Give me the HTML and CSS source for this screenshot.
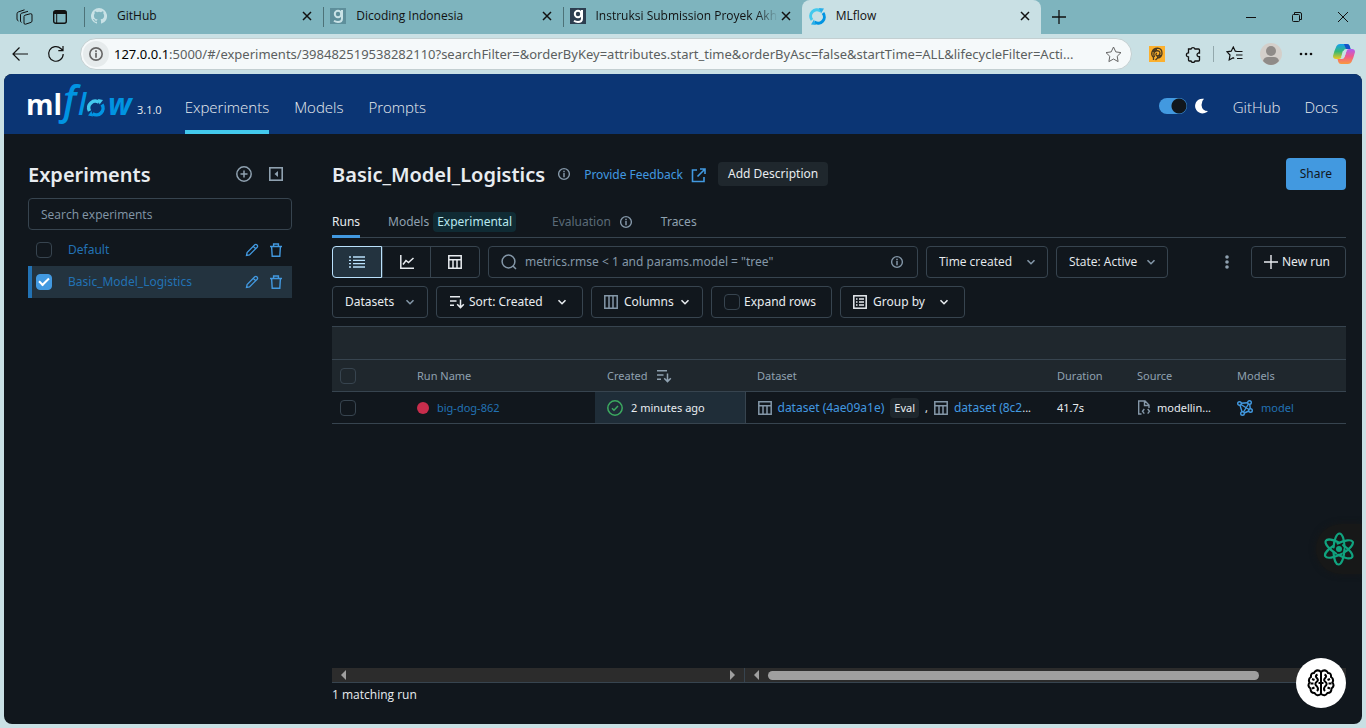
FILE: index.html
```html
<!DOCTYPE html>
<html lang="en">
<head>
<meta charset="utf-8">
<meta name="viewport" content="width=device-width, initial-scale=1">
<title>MLflow</title>
<link rel="stylesheet" href="styles.css">
</head>
<body>
<svg class="defs" aria-hidden="true">
  <symbol id="i-x" viewBox="0 0 10 10"><path d="M1 1l8 8M9 1L1 9" fill="none" stroke="currentColor" stroke-width="1.5"/></symbol>
  <symbol id="i-chev" viewBox="0 0 10 10"><path d="M1.5 3.2L5 6.7l3.500-3.500" fill="none" stroke="currentColor" stroke-width="1.6"/></symbol>
  <symbol id="i-info" viewBox="0 0 14 14"><circle cx="7" cy="7" r="5.400" fill="none" stroke="currentColor" stroke-width="1.400"/><path d="M7 6v4.200M7 3.800v1.400" stroke="currentColor" stroke-width="1.500"/></symbol>
  <symbol id="i-pencil" viewBox="0 0 14 14"><path d="M1.500 12.500l.6-3L9.800 1.800a1.400 1.400 0 0 1 2 0l.4.4a1.400 1.400 0 0 1 0 2L4.500 11.900zM8.300 3.300l2.400 2.400" fill="none" stroke="currentColor" stroke-width="1.300"/></symbol>
  <symbol id="i-trash" viewBox="0 0 14 14"><path d="M1 3.500h12M4.600 3.500V1h4.800v2.500M2.600 3.500l.6 9.700h7.600l.6-9.700" fill="none" stroke="currentColor" stroke-width="1.400"/></symbol>
  <symbol id="i-table" viewBox="0 0 14 14"><path d="M.8.8h12.400v12.400H.8zM.8 4.800h12.400M5 4.800v8.400M9 4.800v8.400" fill="none" stroke="currentColor" stroke-width="1.500"/></symbol>
  <symbol id="i-sort" viewBox="0 0 16 14"><path d="M1 1.800h10M1 6h6.500M1 10.200h4M11.500 4.500v8M8.200 9.300l3.300 3.300 3.300-3.300" fill="none" stroke="currentColor" stroke-width="1.500"/></symbol>
  <symbol id="i-g" viewBox="0 0 16 16"><rect width="16" height="16" fill="var(--tile)"/><circle cx="8" cy="6" r="3.200" fill="none" stroke="var(--ink)" stroke-width="2"/><path d="M12 2v8.500q0 3.500-4 3.500-2.400 0-4-1.200" fill="none" stroke="var(--ink)" stroke-width="2"/></symbol>
</svg>

<header class="browser">
  <div class="tabstrip">
    <button class="chrome-btn" aria-label="Workspaces"><svg width="17" height="17" viewBox="0 0 17 17" fill="none" stroke="currentColor" stroke-linejoin="round"><path d="M8 7.500q0-1 1-1.300l5.500-1.500q1.500-.2 1.500 1.300v6q0 1-1 1.400l-5.500 1.800q-1.500.3-1.500-1.200z"/><path d="M5.500 13.500Q4.500 13 4.500 12V5.800q0-1.200 1.200-1.600L12 2.300M2.500 12Q1 11.500 1 10V4.800Q1 3.500 2.200 3L8.500.8"/></svg></button>
    <button class="chrome-btn" aria-label="Tab actions"><svg width="14" height="14" viewBox="0 0 14 14"><rect x=".7" y=".7" width="12.600" height="12.600" rx="2" fill="none" stroke="currentColor" stroke-width="1.400"/><path d="M1 1h12v3H1z" fill="currentColor"/><path d="M3.700 4v9" stroke="currentColor"/></svg></button>
    <div class="tabs">
      <div class="tab"><svg class="fav" width="16" height="16" viewBox="0 0 16 16"><path fill="#c9e2e6" d="M8 0a8 8 0 0 0-2.530 15.590c.4.070.55-.17.550-.38v-1.490c-2.010.37-2.530-.490-2.690-.940-.09-.230-.480-.940-.820-1.130-.280-.150-.680-.520-.010-.530.630-.010 1.080.580 1.230.820.720 1.210 1.870.870 2.330.660.070-.520.280-.870.510-1.070-1.780-.2-3.640-.890-3.640-3.950 0-.870.310-1.590.820-2.150-.080-.2-.360-1.020.080-2.120 0 0 .670-.210 2.200.820a7.400 7.400 0 0 1 4 0c1.530-1.040 2.200-.820 2.200-.820.440 1.100.160 1.920.080 2.120.510.560.820 1.270.820 2.150 0 3.070-1.870 3.750-3.650 3.950.290.250.540.730.540 1.480v2.200c0 .21.150.46.550.38A8 8 0 0 0 8 0"/></svg><span class="tab-title">GitHub</span><button class="close" aria-label="Close GitHub"><svg width="10" height="10"><use href="#i-x"/></svg></button></div>
      <div class="tab"><svg class="fav fav-dim" width="16" height="16"><use href="#i-g"/></svg><span class="tab-title">Dicoding Indonesia</span><button class="close" aria-label="Close Dicoding Indonesia"><svg width="10" height="10"><use href="#i-x"/></svg></button></div>
      <div class="tab"><svg class="fav fav-dark" width="16" height="16"><use href="#i-g"/></svg><span class="tab-title tab-fade">Instruksi Submission Proyek Akhir</span><button class="close" aria-label="Close Instruksi Submission"><svg width="10" height="10"><use href="#i-x"/></svg></button></div>
      <div class="tab tab-active"><svg class="fav" width="17" height="17" viewBox="0 0 17 17" fill="none" stroke-width="3"><path d="M3 12A6.300 6.300 0 0 1 11.500 2.900" stroke="#43c9ed"/><path d="M14 5A6.300 6.300 0 0 1 5.500 14.100" stroke="#0194e2"/><path d="M10 0l5 .5-3 5zM7 17l-5-.5 3-5z" fill="#28aee8"/></svg><span class="tab-title">MLflow</span><button class="close" aria-label="Close MLflow"><svg width="10" height="10"><use href="#i-x"/></svg></button></div>
    </div>
    <button class="chrome-btn" aria-label="New tab"><svg width="14" height="14" viewBox="0 0 14 14"><path d="M7 0v14M0 7h14" stroke="currentColor" stroke-width="1.300"/></svg></button>
    <div class="window-controls">
      <button aria-label="Minimize"><svg width="10" height="10" viewBox="0 0 10 10"><path d="M0 5.500h10" stroke="currentColor"/></svg></button>
      <button aria-label="Restore"><svg width="10" height="10" viewBox="0 0 10 10" fill="none" stroke="currentColor"><rect x=".5" y="2.500" width="7" height="7" rx="1"/><path d="M2.500 2V.5H8Q9.500.5 9.500 2v5.500H8"/></svg></button>
      <button aria-label="Close window"><svg width="10" height="10" viewBox="0 0 10 10"><path d="M0 0l10 10M10 0L0 10" stroke="currentColor"/></svg></button>
    </div>
  </div>
  <div class="toolbar">
    <button class="chrome-btn nav-btn" aria-label="Back"><svg width="16" height="14" viewBox="0 0 16 14"><path d="M16 7H1M7.500.5L1 7l6.500 6.500" fill="none" stroke="currentColor" stroke-width="1.200"/></svg></button>
    <button class="chrome-btn nav-btn" aria-label="Reload"><svg width="18" height="18" viewBox="0 0 18 18"><path d="M16.200 9A7.300 7.300 0 1 1 14 3.700l1.700 1.600M16 1v4.700h-4.700" fill="none" stroke="currentColor" stroke-width="1.200"/></svg></button>
    <div class="address">
      <span class="site-info"><svg width="16" height="16"><use href="#i-info"/></svg></span>
      <span class="url"><b>127.0.0.1</b>:5000/#/experiments/398482519538282110?searchFilter=&amp;orderByKey=attributes.start_time&amp;orderByAsc=false&amp;startTime=ALL&amp;lifecycleFilter=Acti...</span>
      <button class="star" aria-label="Favorite"><svg width="17" height="17" viewBox="0 0 17 17"><path d="M8.500 1l2.300 4.900 5.200.7-3.800 3.700.9 5.300-4.600-2.600-4.600 2.600.9-5.300L1 6.600l5.200-.7z" fill="none" stroke="currentColor" stroke-linejoin="round"/></svg></button>
    </div>
    <div class="extensions">
      <button aria-label="Extension"><svg width="16" height="16" viewBox="0 0 16 16"><path d="M0 0h16v16H0z" fill="#fcb02d"/><path d="M4.500 14v-2.500Q2 9 3 6q1.500-3.800 5.500-3.800Q13 2.500 13 7.200q0 4.300-4.500 4.800L6.500 14M5.500 11Q3.500 6 7.500 4.800q3.500-.3 3.500 2.500-.3 2.700-3 2.700Q5.800 8.500 8 7M4 6q1.500-2.500 4-2.500M12 9q-1 2.500-4 2.500" fill="none" stroke="#4b3a1e" stroke-width="1.300"/></svg></button>
      <button aria-label="Extensions"><svg width="16" height="17" viewBox="0 0 16 17"><path d="M3.500 3H6a2.100 2.100 0 0 1 4 0h3.500q1 0 1 1v3h-1.200a1.900 1.900 0 0 0 0 3.600h1.200V14q0 1-1 1H10a2.100 2.100 0 0 1-4 0H4.500q-1 0-1-1v-3a2.100 2.100 0 0 1 0-4.200z" fill="none" stroke="currentColor" stroke-width="1.300"/></svg></button>
      <span class="divider"></span>
      <button aria-label="Favorites"><svg width="17" height="16" viewBox="0 0 17 16"><path d="M11 5.500L9.300 5.200 7.300 1 5.200 5.200 1 5.800l3 3.200-.8 5 4-2.200 1 .6M11 5.500h5.500M10 9h6.500M11 12.500h5.500" fill="none" stroke="currentColor" stroke-width="1.200"/></svg></button>
      <button aria-label="Profile"><svg width="22" height="22" viewBox="0 0 22 22"><circle cx="11" cy="11" r="11" fill="#d4cfca"/><circle cx="11" cy="8" r="5" fill="#8f8b88"/><path d="M3 18q1-4 5-4h6q4 0 5 4-3.500 4-8 4t-8-4" fill="#8f8b88"/></svg></button>
      <button aria-label="More"><svg width="14" height="4" viewBox="0 0 14 4" fill="currentColor"><circle cx="2" cy="2" r="1.300"/><circle cx="7" cy="2" r="1.300"/><circle cx="12" cy="2" r="1.300"/></svg></button>
      <button class="copilot" aria-label="Copilot"><svg width="22" height="22" viewBox="0 0 22 22"><defs><linearGradient id="cA" x2="0" y2="1"><stop stop-color="#149ff0"/><stop offset=".5" stop-color="#35b875"/><stop offset="1" stop-color="#f2c81e"/></linearGradient><linearGradient id="cB" x2="0" y2="1"><stop stop-color="#b05cf0"/><stop offset=".5" stop-color="#f05a8c"/><stop offset="1" stop-color="#f99a3c"/></linearGradient></defs><path d="M7 1h7q2 0 2.700 2l.8 3H13q-2 0-2.600 2L8.500 14q-.8 2-2.500 2H3q-3 0-3-3Q1.500 7 3.500 3 4.700 1 7 1z" fill="url(#cA)"/><path d="M15 21H8q-2 0-2.700-2l-.8-3H9q2 0 2.600-2L13.500 8q.8-2 2.500-2h3q3 0 3 3-1.500 6-3.500 10-1.200 2-3.500 2z" fill="url(#cB)"/><path d="M11 1h3q2 0 2.700 2l.8 3H13z" fill="#1652c8"/><path d="M9.800 8h3.700l-2 6H8.200z" fill="#c9e0e4"/></svg></button>
    </div>
  </div>
</header>

<div class="page">
  <header class="app-header">
    <a class="logo" href="#" aria-label="MLflow home"><svg width="105" height="60" viewBox="0 -9 105 60">
      <text class="logo-ml" x="-1" y="32">ml</text>
      <text class="logo-f" x="36" y="31">f</text><text class="logo-l" x="51" y="32">l</text>
      <text class="logo-w" x="81" y="32">w</text>
      <g fill="none" stroke-width="3.500"><path d="M62.500 28A6.700 6.700 0 0 1 72 19.200" stroke="#43c9ed"/><path d="M75 21.500A6.700 6.700 0 0 1 65.500 30.600" stroke="#0194e2"/></g><path d="M71 16l5 1-3.500 4.500z" fill="#43c9ed"/><path d="M66 33.500l-5-1 3.500-4.500z" fill="#0194e2"/>
    </svg></a>
    <span class="version">3.1.0</span>
    <nav class="main-nav">
      <a class="current" href="#">Experiments</a><a href="#">Models</a><a href="#">Prompts</a>
    </nav>
    <div class="header-right">
      <label class="theme"><input type="checkbox" role="switch" checked aria-label="Dark mode"><svg width="14" height="16" viewBox="0 0 14 16"><path d="M9 .8A7.400 7.400 0 1 0 13 13Q7 13 6.500 7 6.500 3 9 .8z" fill="#fff"/></svg></label>
      <a href="#">GitHub</a><a href="#">Docs</a>
    </div>
  </header>

  <div class="content">
    <aside class="sidebar">
      <div class="side-head">
        <h2>Experiments</h2>
        <button aria-label="Create experiment"><svg width="16" height="16" viewBox="0 0 16 16"><circle cx="8" cy="8" r="7.200" fill="none" stroke="currentColor" stroke-width="1.500"/><path d="M8 4.500v7M4.500 8h7" stroke="currentColor" stroke-width="1.500"/></svg></button>
        <button aria-label="Collapse"><svg width="16" height="16" viewBox="0 0 16 16"><rect x="1.800" y="1.800" width="12.400" height="12.400" fill="none" stroke="currentColor" stroke-width="1.600"/><path d="M10 5v6L6.500 8z" fill="currentColor"/></svg></button>
      </div>
      <input class="side-search" type="text" placeholder="Search experiments" aria-label="Search experiments">
      <ul class="exp-list">
        <li><input class="check" type="checkbox" aria-label="Select Default"><a href="#">Default</a><button aria-label="Rename Default"><svg width="14" height="14"><use href="#i-pencil"/></svg></button><button aria-label="Delete Default"><svg width="14" height="14"><use href="#i-trash"/></svg></button></li>
        <li class="selected"><input class="check" type="checkbox" checked aria-label="Select Basic_Model_Logistics"><a href="#">Basic_Model_Logistics</a><button aria-label="Rename Basic_Model_Logistics"><svg width="14" height="14"><use href="#i-pencil"/></svg></button><button aria-label="Delete Basic_Model_Logistics"><svg width="14" height="14"><use href="#i-trash"/></svg></button></li>
      </ul>
    </aside>

    <main class="main">
      <div class="title-row">
        <h1>Basic_Model_Logistics</h1>
        <svg class="muted" width="14" height="14"><use href="#i-info"/></svg>
        <a class="feedback" href="#">Provide Feedback <svg width="15" height="15" viewBox="0 0 15 15"><path d="M6 2H1.500v11.500H13V9M9 1h5v5M14 1L6.500 8.500" fill="none" stroke="currentColor" stroke-width="1.600"/></svg></a>
        <button class="add-desc">Add Description</button>
        <button class="share">Share</button>
      </div>
      <nav class="view-tabs">
        <a class="on" href="#">Runs</a>
        <a href="#">Models <span class="badge">Experimental</span></a>
        <a class="off" href="#">Evaluation <svg class="muted" width="14" height="14"><use href="#i-info"/></svg></a>
        <a href="#">Traces</a>
      </nav>
      <div class="filters">
        <div class="segmented">
          <button class="on" aria-label="Table view"><svg width="16" height="12" viewBox="0 0 16 12"><path d="M0 1h2M4 1h12M0 4.300h2M4 4.300h12M0 7.600h2M4 7.600h12M0 11h2M4 11h12" stroke="currentColor" stroke-width="1.300"/></svg></button>
          <button aria-label="Chart view"><svg width="14" height="14" viewBox="0 0 14 14"><path d="M.8 0v13.200H14M3 9.500l3-4 2.500 2L13.500 3" fill="none" stroke="currentColor" stroke-width="1.500"/></svg></button>
          <button aria-label="Artifact view"><svg width="14" height="14"><use href="#i-table"/></svg></button>
        </div>
        <div class="run-search">
          <svg width="16" height="16" viewBox="0 0 16 16"><circle cx="7.500" cy="7.500" r="6.400" fill="none" stroke="currentColor" stroke-width="1.500"/><path d="M12 12l3 3" stroke="currentColor" stroke-width="1.500"/></svg>
          <input type="text" placeholder="metrics.rmse &lt; 1 and params.model = &quot;tree&quot;" aria-label="Search runs">
          <svg width="14" height="14"><use href="#i-info"/></svg>
        </div>
        <div class="pick pick-time"><select aria-label="Time created"><option>Time created</option></select><svg class="muted" width="10" height="10"><use href="#i-chev"/></svg></div>
        <div class="pick pick-state"><select aria-label="State"><option>State: Active</option></select><svg class="muted" width="10" height="10"><use href="#i-chev"/></svg></div>
        <button class="kebab" aria-label="More options"><svg width="4" height="14" viewBox="0 0 4 14" fill="currentColor"><circle cx="2" cy="2" r="1.800"/><circle cx="2" cy="7" r="1.800"/><circle cx="2" cy="12" r="1.800"/></svg></button>
        <button class="btn w-new"><svg width="14" height="14" viewBox="0 0 14 14"><path d="M7 0v14M0 7h14" stroke="currentColor" stroke-width="1.400"/></svg>New run</button>
      </div>
      <div class="filters">
        <button class="btn w-datasets" aria-haspopup="true">Datasets<svg class="muted chev" width="10" height="10"><use href="#i-chev"/></svg></button>
        <button class="btn w-sort" aria-haspopup="true"><svg width="16" height="14"><use href="#i-sort"/></svg>Sort: Created<svg class="chev" width="10" height="10"><use href="#i-chev"/></svg></button>
        <button class="btn w-columns" aria-haspopup="true"><svg class="muted" width="14" height="14" viewBox="0 0 14 14"><path d="M.8.8h12.400v12.400H.8zM5 .8v12.400M9 .8v12.400" fill="none" stroke="currentColor" stroke-width="1.500"/></svg>Columns<svg class="chev" width="10" height="10"><use href="#i-chev"/></svg></button>
        <label class="btn w-expand"><input class="check" type="checkbox">Expand rows</label>
        <button class="btn w-group" aria-haspopup="true"><svg width="14" height="14" viewBox="0 0 14 14"><rect x=".8" y=".8" width="12.400" height="12.400" fill="none" stroke="currentColor" stroke-width="1.500"/><path d="M3 4h1.500M6 4h5M3 7h1.500M6 7h5M3 10h1.500M6 10h5" stroke="currentColor" stroke-width="1.300"/></svg>Group by<svg class="chev" width="10" height="10"><use href="#i-chev"/></svg></button>
      </div>

      <table class="runs">
        <colgroup><col class="c-check"><col class="c-name"><col class="c-created"><col class="c-dataset"><col class="c-duration"><col class="c-source"><col></colgroup>
        <thead>
          <tr class="group"><td colspan="7"></td></tr>
          <tr><th class="cell-check"><input class="check" type="checkbox" aria-label="Select all runs"></th><th>Run Name</th><th><span class="cell">Created <svg width="16" height="14"><use href="#i-sort"/></svg></span></th><th>Dataset</th><th>Duration</th><th>Source</th><th>Models</th></tr>
        </thead>
        <tbody>
          <tr>
            <td class="cell-check"><input class="check" type="checkbox" aria-label="Select big-dog-862"></td>
            <td><span class="cell"><i class="dot"></i><a href="#">big-dog-862</a></span></td>
            <td class="sorted"><span class="cell"><svg width="16" height="16" viewBox="0 0 16 16" fill="none" stroke="#3caa60" stroke-width="1.500"><circle cx="8" cy="8" r="7.200"/><path d="M5 8.200l2 2L11 6"/></svg>2 minutes ago</span></td>
            <td><span class="cell datasets"><svg class="muted" width="14" height="14"><use href="#i-table"/></svg><a class="bright" href="#">dataset (4ae09a1e)</a><span class="tag">Eval</span><span>,</span><svg class="muted" width="14" height="14"><use href="#i-table"/></svg><a class="bright" href="#">dataset (8c2</a><span class="dots">...</span></span></td>
            <td>41.7s</td>
            <td><span class="cell source"><svg class="muted" width="14" height="15" viewBox="0 0 14 15" fill="none" stroke="currentColor" stroke-width="1.400"><path d="M4.500 14H1.700V1H8l4 4v3M7.500 1v4.500H12M7.300 9L5.500 11.300l1.800 2.300M10.700 9l1.800 2.300-1.800 2.300"/></svg>modellin...</span></td>
            <td><span class="cell models"><svg width="16" height="16" viewBox="0 0 16 16" fill="none" stroke="#4299e0" stroke-width="1.400"><circle cx="2.500" cy="3.500" r="1.800"/><circle cx="12.500" cy="2.500" r="1.800"/><circle cx="13.500" cy="10.500" r="1.800"/><circle cx="5.500" cy="13.500" r="1.800"/><path d="M4.300 3.300l6.400-.6M12.700 4.300l.6 4.400M11.800 11l-4.500 2M3 5.300l2 6.500M4 4.500l8 5M11.500 4l-5 8"/></svg><a href="#">model</a></span></td>
          </tr>
        </tbody>
      </table>

      <div class="hscroll">
        <div class="pane pane-left"><i class="arrow-l"></i><i class="arrow-r"></i></div>
        <div class="pane pane-right"><i class="arrow-l"></i><i class="thumb"></i></div>
      </div>
      <p class="count">1 matching run</p>
    </main>
  </div>

  <button class="float-atom" aria-label="Assistant"><svg width="34" height="34" viewBox="0 0 34 34" fill="none" stroke="#10a37f" stroke-width="2.200" stroke-linecap="round"><g stroke-dasharray="31 5"><ellipse cx="17" cy="17" rx="5.500" ry="15.500" transform="rotate(2 17 17)"/><ellipse cx="17" cy="17" rx="5.500" ry="15.500" transform="rotate(62 17 17)"/><ellipse cx="17" cy="17" rx="5.500" ry="15.500" transform="rotate(122 17 17)"/></g><circle cx="17" cy="17" r="3" fill="#10a37f" stroke="none"/></svg></button>
  <button class="float-brain" aria-label="Open side panel"><svg width="28" height="28" viewBox="0 0 28 28" fill="none" stroke="#000" stroke-width="2"><path id="half" d="M14 3Q11 0 8 2.500L7 4Q3.500 4 4 8 .8 10 2.500 13.500 0 17 3.500 19.500 3.500 24 7.500 24 10 28 14 25M10.500 5.500Q7.500 7 10 9.200q2 2-.5 3.800-2.500 2 .5 4.500 2 2.500 0 4.500M5 10l2.500 1M3.500 14.500H6.500M5 19.500l2.500-1M11.500 14H14M14 2.500V25"/><use href="#half" transform="matrix(-1 0 0 1 28 0)"/></svg></button>
</div>
</body>
</html>
```
FILE: styles.css
```css
* { box-sizing: border-box; }
html { height: 100%; }
body {
  margin: 0;
  min-height: 100vh;
  display: flex;
  flex-direction: column;
  background: #c9e0e4;
  font: 12px/20px "Open Sans", "Noto Sans", sans-serif;
  color: #e8ecf0;
}
button, input, select { font: inherit; color: inherit; }
button { border: 0; padding: 0; background: none; display: flex; align-items: center; justify-content: center; white-space: nowrap; }
a { color: inherit; text-decoration: none; }
svg { flex: none; display: block; }
.defs { position: absolute; width: 0; height: 0; }
.muted { color: #8497a8; }

/* Browser chrome */
.browser { color: #111; }
.tabstrip { display: flex; height: 34px; background: #7eb4be; align-items: center; padding-left: 6px; }
.chrome-btn { width: 36px; height: 32px; flex: none; }
.tabs { display: flex; flex: 0 1 957px; min-width: 0; height: 34px; margin-left: 6px; }
.tab { flex: 1 1 0; min-width: 0; display: flex; align-items: center; padding: 0 8px 2px 7px; position: relative; }
.tab::before { content: ""; position: absolute; left: 0; top: 7px; height: 20px; width: 1px; background: #4d7278; }
.tab-title { flex: 1; min-width: 0; margin-left: 10px; overflow: hidden; white-space: nowrap; }
.tab-fade { overflow: visible; -webkit-mask-image: linear-gradient(90deg, #000 88%, transparent); mask-image: linear-gradient(90deg, #000 88%, transparent); }
.fav-dim { --tile: #5e8f9b; --ink: #c9e2e6; }
.fav-dark { --tile: #2d3e50; --ink: #fff; }
.close { width: 16px; height: 16px; flex: none; }
.tab-active { background: #c9e0e4; border-radius: 8px 8px 0 0; }
.tab-active::before { display: none; }
.window-controls { margin-left: auto; display: flex; }
.window-controls button { width: 46px; height: 32px; }
.toolbar { display: flex; align-items: center; height: 40px; padding: 0 11px 0 2px; }
.nav-btn { height: 36px; }
.address {
  flex: 1; min-width: 0; margin-left: 6px; height: 32px; display: flex; align-items: center; padding: 0 9px 0 2px;
  background: #f5f9fa; border: 1px solid #c3cfd1; border-radius: 16px;
}
.site-info { width: 26px; height: 26px; border-radius: 13px; background: #e6ebec; display: grid; place-items: center; color: #666; flex: none; }
.url { flex: 1; margin-left: 5px; overflow: hidden; white-space: nowrap; font-family: "Noto Sans", sans-serif; font-size: 13px; color: #5b5f60; }
.url b { font-weight: 400; color: #000; }
.star { color: #666; flex: none; }
.extensions { display: flex; align-items: center; gap: 20px; margin-left: 17px; }
.extensions .divider { width: 1px; height: 16px; background: #93a8ac; margin: 0 -8px; }
.extensions button:nth-last-child(-n+3) { margin-left: -3px; }
.extensions .copilot:last-child { margin-left: 0; }

/* Application */
.page {
  flex: 1; margin: 0 4px 4px; display: flex; flex-direction: column; position: relative;
  background: #11171d; border-radius: 8px; overflow: hidden;
}
.app-header { height: 60px; flex: none; display: flex; align-items: center; background: #0b3574; padding: 0 24px 0 23px; font-size: 15px; font-weight: 300; }
.logo svg { overflow: visible; }
.logo-ml { font: 700 28px "Open Sans", sans-serif; fill: #fff; }
.logo-f { font: italic 600 39px "Open Sans", sans-serif; fill: #0194e2; }
.logo-l { font: italic 600 30px "Open Sans", sans-serif; fill: #0194e2; }
.logo-w { font: italic 700 30px "Open Sans", sans-serif; fill: #0194e2; }
.version { margin: 12px 0 0 5px; font-size: 11px; font-weight: 400; }
.main-nav { display: flex; gap: 25px; margin-left: 23px; align-self: stretch; }
.main-nav a { padding-top: 23px; height: 60px; }
.main-nav .current { border-bottom: 4px solid #43c9ed; }
.header-right { margin: 6px 0 0 auto; display: flex; gap: 24px; }
.theme { display: flex; align-items: center; gap: 8px; height: 18px; }
.theme input { appearance: none; margin: 0; width: 28px; height: 16px; border-radius: 8px; background: radial-gradient(circle at 20px 8px, #11171d 7px, #4299e0 8px); }

.content { flex: 1; display: flex; padding: 24px 16px 16px 24px; gap: 40px; }
.sidebar { flex: 0 0 264px; }
.side-head { display: flex; align-items: center; gap: 16px; height: 32px; padding-right: 8px; color: #8fa1b0; }
h1, h2 { margin: 0; padding-top: 2px; font-family: "Noto Sans", sans-serif; font-size: 20px; font-weight: 600; color: #e8ecf0; white-space: nowrap; line-height: 32px; }
h2 { flex: 1; }
.side-search {
  width: 100%; height: 32px; margin: 8px 0 4px; padding: 0 12px; display: block;
  background: transparent; border: 1px solid #37444f; border-radius: 4px;
}
::placeholder { color: #8497a8; opacity: 1; }
.exp-list { list-style: none; margin: 0; padding: 0; }
.exp-list li { display: flex; align-items: center; height: 32px; padding: 0 9px 0 8px; color: #4299e0; }
.exp-list a { flex: 1; margin-left: 16px; color: #2272b4; font-family: "Noto Sans", sans-serif; }
.exp-list button + button { margin-left: 10px; }
.exp-list .selected { background: #23333f; box-shadow: inset 4px 0 #2272b4; }
.check { appearance: none; flex: none; width: 16px; height: 16px; margin: 0; border: 1px solid #37444f; border-radius: 4px; display: grid; place-items: center; }
.check:checked { background: #4299e0; border-color: #4299e0; }
.check:checked::after { content: ""; width: 8px; height: 4px; border: solid #fff; border-width: 0 0 2px 2px; transform: rotate(-45deg) translate(1px, -1px); }

.main { flex: 1; min-width: 0; display: flex; flex-direction: column; }
.title-row, .view-tabs, .filters, .runs { font-family: "Noto Sans", sans-serif; }
.title-row { display: flex; align-items: center; height: 32px; }
.title-row > .muted { margin-left: 12px; }
.feedback { display: flex; align-items: center; gap: 8px; padding-top: 2px; color: #4299e0; margin-left: 13px; white-space: nowrap; }
.add-desc { margin-left: 12px; height: 24px; padding: 0 10px; background: #1f272d; border-radius: 4px; }
.share { margin-left: auto; height: 32px; padding: 0 14px; background: #4299e0; color: #11171d; border-radius: 4px; }
.view-tabs { display: flex; gap: 28px; height: 32px; margin: 16px 0 8px; border-bottom: 1px solid #37444f; color: #8fa1b0; }
.view-tabs a { display: flex; align-items: center; height: 32px; }
.view-tabs .on { color: #e8ecf0; border-bottom: 3px solid #4299e0; padding-top: 3px; }
.view-tabs .off { color: #5b6b78; gap: 8px; padding-left: 8px; }
.badge { margin-left: 4px; padding: 0 4px; background: #102b34; color: #b8e8ef; border-radius: 4px; }
.filters { display: flex; gap: 8px; margin-bottom: 8px; }
.segmented { display: flex; flex: 0 0 148px; height: 32px; border: 1px solid #37444f; border-radius: 4px; }
.segmented button { flex: 1; border-left: 1px solid #37444f; }
.segmented .on { margin: -1px 0 -1px -1px; border: 1px solid #bae1fc; border-radius: 4px 0 0 4px; background: #23333f; color: #bae1fc; }
.run-search { flex: 0 1 430px; min-width: 0; display: flex; align-items: center; gap: 8px; height: 32px; padding: 0 13px 0 12px; border: 1px solid #37444f; border-radius: 4px; color: #8497a8; }
.run-search input { flex: 1; min-width: 0; padding: 0; border: 0; background: none; }
.btn, .pick { height: 32px; border: 1px solid #37444f; border-radius: 4px; display: flex; align-items: center; }
.btn { justify-content: flex-start; gap: 4px; padding: 0 12px; white-space: nowrap; }
.chev { margin-left: auto; }
.pick { position: relative; }
.pick select { appearance: none; width: 100%; height: 30px; border: 0; background: none; padding: 0 0 0 12px; font-family: "Open Sans", sans-serif; }
.pick svg { position: absolute; right: 11px; pointer-events: none; }
.pick-time { flex: 0 0 122px; }
.pick-state { flex: 0 0 112px; }
.kebab { margin-left: auto; width: 32px; color: #8fa1b0; }
.w-new { width: 95px; }
.w-datasets { width: 96px; }
.w-sort { width: 147px; padding-right: 15px; }
.w-columns { width: 112px; padding-right: 15px; }
.w-expand { width: 121px; }
.w-group { width: 125px; padding-right: 15px; }
.w-columns, .w-group { gap: 6px; }

.runs { width: 100%; table-layout: fixed; border-collapse: collapse; border-top: 1px solid #37444f; }
.c-check { width: 73px; }
.c-name { width: 190px; }
.c-created { width: 150px; }
.c-dataset { width: 300px; }
.c-duration { width: 80px; }
.c-source { width: 100px; }
.runs thead { background: #1f272d; color: #8fa1b0; font-size: 11px; }
.runs th, .runs td { height: 32px; padding: 0 0 0 12px; text-align: left; font-weight: 400; border-bottom: 1px solid #37444f; white-space: nowrap; }
.runs .group td { height: 33px; }
.runs tbody { font-size: 11px; }
.runs tbody a { color: #2272b4; }
.runs tbody .bright { color: #4299e0; font-size: 12px; }
.runs .cell-check { padding-left: 8px; }
.cell { display: flex; align-items: center; gap: 8px; }
.dot { width: 12px; height: 12px; border-radius: 6px; background: #c82d4c; }
.runs .sorted { background: #1f2d38; border-right: 1px solid #37444f; }
.datasets { gap: 6px; }
.tag { padding: 0 4px; background: #1f272d; border-radius: 4px; }
.dots { margin-left: -6px; }
.source { gap: 6px; }

.hscroll { display: flex; margin-top: auto; height: 15px; border-bottom: 1px solid #37444f; }
.pane { display: flex; align-items: center; background: #2c2c2c; }
.pane-left { flex: 0 0 413px; padding: 0 9px; justify-content: space-between; border-right: 1px solid #37444f; }
.pane-right { flex: 1; padding: 0 87px 0 9px; gap: 9px; }
.arrow-l, .arrow-r { border: solid transparent; border-width: 5px 0; }
.arrow-l { border-right: 5px solid #9f9f9f; }
.arrow-r { border-left: 5px solid #9f9f9f; }
.thumb { flex: 1; height: 9px; border-radius: 5px; background: #9f9f9f; }
.count { margin: 2px 0 3px; }

/* Floating helpers */
.float-atom { position: absolute; right: 0; bottom: 150px; width: 46px; height: 50px; border-radius: 25px 0 0 25px; background: #171818; box-shadow: 0 0 6px #171818; }
.float-brain { position: absolute; right: 16px; bottom: 16px; width: 50px; height: 50px; border-radius: 25px; background: #fff; }
```
